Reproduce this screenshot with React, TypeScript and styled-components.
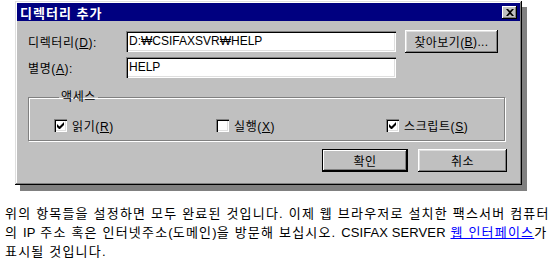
import React from 'react';
import styled, { createGlobalStyle } from 'styled-components';

const GlobalStyle = createGlobalStyle`
  body {
    margin: 0;
    background: #fff;
    font-family: "Liberation Sans", "Noto Sans CJK KR", sans-serif;
  }
`;

const Page = styled.div`
  width: 557px;
  height: 276px;
  overflow: hidden;
`;

const Window = styled.div`
  box-sizing: border-box;
  width: 507px;
  height: 184px;
  margin: 1px 0 0 15px;
  padding: 2px;
  background: #c0c0c0;
  box-shadow: inset -1px -1px #000, inset 1px 1px #dfdfdf,
    inset -2px -2px #808080, inset 2px 2px #fff, 5px 6px 0 #808080;
  font-size: 12px;
  color: #000;
`;

const TitleBar = styled.div`
  display: flex;
  align-items: center;
  justify-content: space-between;
  height: 18px;
  padding: 0 3px 0 3px;
  background: #000080;
  color: #fff;
  font-weight: bold;
  font-size: 13px;
  letter-spacing: 1px;
`;

const CloseButton = styled.div`
  box-sizing: border-box;
  width: 15px;
  height: 13px;
  display: flex;
  align-items: center;
  justify-content: center;
  background: #c0c0c0;
  box-shadow: inset -1px -1px #000, inset 1px 1px #fff, inset -2px -2px #808080;
`;

const Body = styled.div`
  padding: 9px 13px 0 11px;
`;

const Form = styled.div`
  display: grid;
  grid-template-columns: 98px 279px 93px;
  grid-auto-rows: 23px;
  row-gap: 3px;
  align-items: center;
`;

const Label = styled.label`
  white-space: nowrap;
  font-size: 12px;
  letter-spacing: 0.6px;
`;

const TextBox = styled.div`
  box-sizing: border-box;
  height: 21px;
  margin-right: 9px;
  padding: 2px 3px;
  background: #fff;
  box-shadow: inset 1px 1px #808080, inset 2px 2px #000, inset -1px -1px #fff,
    inset -2px -2px #dfdfdf;
  font-size: 12px;
  line-height: 17px;
  white-space: nowrap;
`;

const Button = styled.div<{ $default?: boolean; $width: number }>`
  box-sizing: border-box;
  width: ${(p) => p.$width}px;
  height: 23px;
  display: flex;
  align-items: center;
  justify-content: center;
  background: #c0c0c0;
  font-size: 12px;
  letter-spacing: 0.4px;
  white-space: nowrap;
  box-shadow: ${(p) =>
    p.$default
      ? 'inset 0 0 0 1px #000, inset -2px -2px #000, inset 2px 2px #fff, inset -3px -3px #808080'
      : 'inset -1px -1px #000, inset 1px 1px #fff, inset -2px -2px #808080, inset 2px 2px #dfdfdf'};
`;

const Group = styled.fieldset`
  box-sizing: border-box;
  width: 477px;
  height: 50px;
  margin: 12px 0 0 0;
  padding: 0 0 0 25px;
  border: 1px solid #808080;
  box-shadow: 1px 1px 0 #fff, inset 1px 1px 0 #fff;
  display: grid;
  grid-template-columns: 162px 170px auto;
  align-items: center;
`;

const Legend = styled.legend`
  padding: 0 2px;
  margin-left: 5px;
  font-size: 12px;
  letter-spacing: 0.6px;
  line-height: 13px;
`;

const CheckItem = styled.div`
  display: flex;
  align-items: center;
  gap: 5px;
  font-size: 12px;
  letter-spacing: 0.6px;
  margin-top: 6px;
`;

const Box = styled.div`
  box-sizing: border-box;
  width: 13px;
  height: 13px;
  background: #fff;
  box-shadow: inset 1px 1px #808080, inset 2px 2px #000, inset -1px -1px #fff,
    inset -2px -2px #dfdfdf;
  display: flex;
  align-items: center;
  justify-content: center;
`;

const Actions = styled.div`
  display: flex;
  justify-content: flex-end;
  gap: 10px;
  margin-top: 8px;
`;

const Text = styled.p`
  margin: 19px 0 0 5px;
  font-size: 13px;
  line-height: 19px;
  letter-spacing: 1.2px;
  white-space: nowrap;
`;

const Latin = styled.span`
  letter-spacing: 0.1px;
`;

const Link = styled.a`
  color: #0000ff;
  text-decoration: underline;
`;

const Check: React.FC<{ checked: boolean; children: React.ReactNode }> = ({
  checked,
  children,
}) => (
  <CheckItem>
    <Box>
      {checked && (
        <svg width="7" height="7" viewBox="0 0 7 7">
          <path d="M0 2v3l2 2h1l4-4V0L2.5 4.5z" fill="#000" />
        </svg>
      )}
    </Box>
    <span>{children}</span>
  </CheckItem>
);

const App: React.FC = () => (
  <Page>
    <GlobalStyle />
    <Window>
      <TitleBar>
        <span>디렉터리 추가</span>
        <CloseButton>
          <svg width="8" height="7" viewBox="0 0 8 7">
            <path d="M0 0h2l2 2 2-2h2L5 3.5 8 7H6L4 5 2 7H0l3-3.5z" fill="#000" />
          </svg>
        </CloseButton>
      </TitleBar>
      <Body>
        <Form>
          <Label>
            디렉터리(<u>D</u>):
          </Label>
          <TextBox>D:₩CSIFAXSVR₩HELP</TextBox>
          <Button $width={93}>
            찾아보기(<u>B</u>)...
          </Button>
          <Label>
            별명(<u>A</u>):
          </Label>
          <TextBox>HELP</TextBox>
        </Form>
        <Group>
          <Legend>액세스</Legend>
          <Check checked>
            읽기(<u>R</u>)
          </Check>
          <Check checked={false}>
            실행(<u>X</u>)
          </Check>
          <Check checked>
            스크립트(<u>S</u>)
          </Check>
        </Group>
        <Actions>
          <Button $default $width={86}>
            확인
          </Button>
          <Button $width={89}>취소</Button>
        </Actions>
      </Body>
    </Window>
    <Text>
      위의 항목들을 설정하면 모두 완료된 것입니다. 이제 웹 브라우저로 설치한 팩스서버 컴퓨터
      <br />
      의 <Latin>IP</Latin> 주소 혹은 인터넷주소<Latin>(</Latin>도메인<Latin>)</Latin>을 방문해
      보십시오. <Latin>CSIFAX SERVER</Latin> <Link>웹 인터페이스</Link>가
      <br />
      표시될 것입니다.
    </Text>
  </Page>
);

export default App;
